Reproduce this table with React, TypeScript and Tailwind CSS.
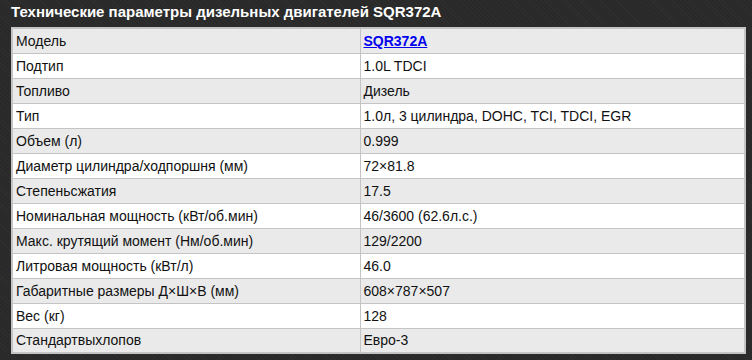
import React from 'react';

const rows: [string, string][] = [
  ['Модель', 'SQR372A'],
  ['Подтип', '1.0L TDCI'],
  ['Топливо', 'Дизель'],
  ['Тип', '1.0л, 3 цилиндра, DOHC, TCI, TDCI, EGR'],
  ['Объем (л)', '0.999'],
  ['Диаметр цилиндра/ходпоршня (мм)', '72×81.8'],
  ['Степеньсжатия', '17.5'],
  ['Номинальная мощность (кВт/об.мин)', '46/3600 (62.6л.с.)'],
  ['Макс. крутящий момент (Нм/об.мин)', '129/2200'],
  ['Литровая мощность (кВт/л)', '46.0'],
  ['Габаритные размеры Д×Ш×В (мм)', '608×787×507'],
  ['Вес (кг)', '128'],
  ['Стандартвыхлопов', 'Евро-3'],
];

export default function App() {
  return (
    <div className="w-[752px] h-[360px] overflow-hidden bg-[#2b2b2b] bg-[repeating-linear-gradient(45deg,#2e2e2e_0px,#2e2e2e_1px,#292929_1px,#292929_3px)] font-['Liberation_Sans',Arial,sans-serif]">
      <h2 className="pl-[11px] pt-[3px] h-[27px] text-[15px] leading-[17px] font-bold text-white">
        Технические параметры дизельных двигателей SQR372A
      </h2>
      <table className="ml-[11px] w-[735px] border-collapse border-2 border-[#c4c4c4] text-[14px] text-[#111]">
        <tbody>
          {rows.map(([k, v], i) => (
            <tr key={k} className={i % 2 === 0 ? 'bg-[#eaeaea]' : 'bg-white'}>
              <td className="w-[348px] h-[25px] px-[3px] py-0 border border-[#c4c4c4] leading-[16px]">{k}</td>
              <td className="h-[25px] px-[3px] py-0 border border-[#c4c4c4] leading-[16px]">
                {i === 0 ? (
                  <a href="#" className="text-[#0000ee] font-bold underline">{v}</a>
                ) : (
                  v
                )}
              </td>
            </tr>
          ))}
        </tbody>
      </table>
    </div>
  );
}
